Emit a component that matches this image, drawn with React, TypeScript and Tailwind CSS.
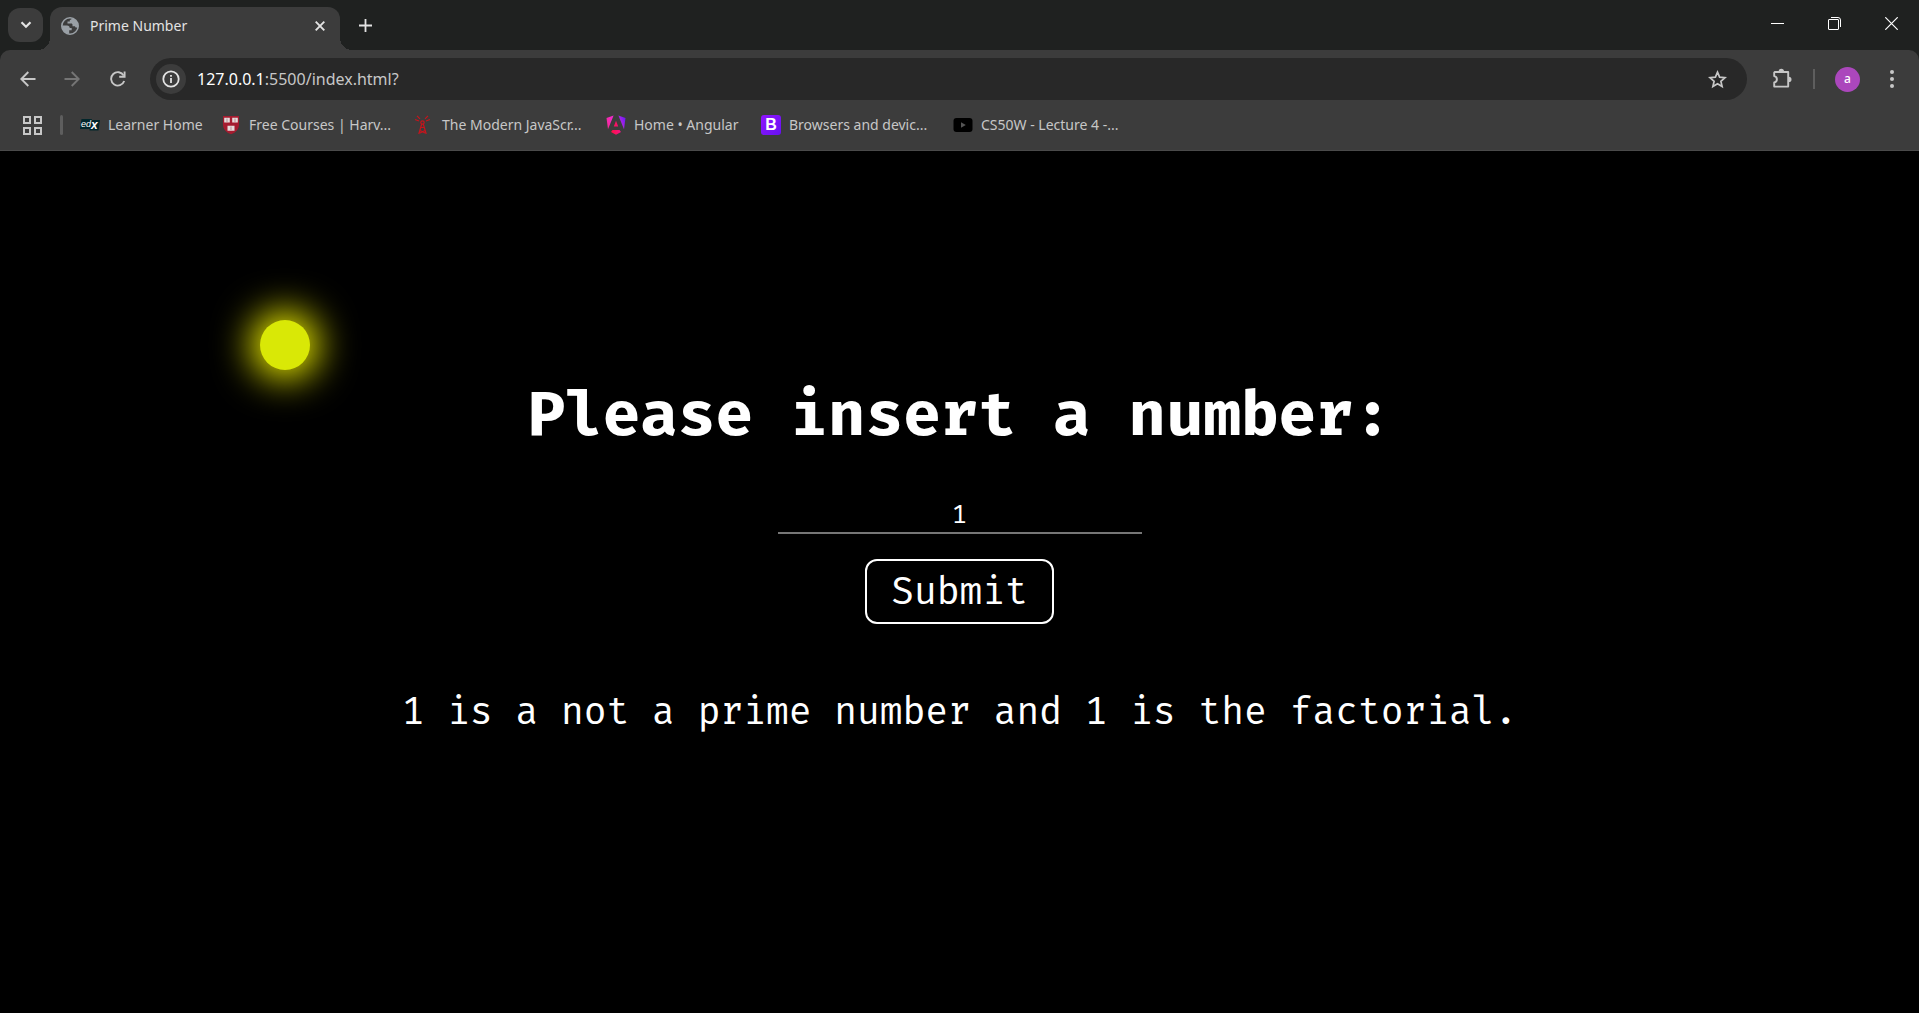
import { useState } from "react";
import type { ReactNode } from "react";

function ChevronIcon() {
  return (
    <svg width="12" height="8" viewBox="0 0 12 8" fill="none" stroke="#e3e3e3" strokeWidth="2.2">
      <path d="M1.5 1.2 6 5.7l4.500-4.500" />
    </svg>
  );
}

function GlobeIcon() {
  return (
    <svg width="18" height="18" viewBox="0 0 18 18">
      <circle cx="9" cy="9" r="8.200" fill="#3c3c3c" stroke="#9aa0a6" strokeWidth="1.600" />
      <path
        d="M1 8.500h5c1.800 0 2.700.9 2.700 2.500h2v2.300H8.200v3.500C4 17 1.200 13.500 1 8.500z"
        fill="#9aa0a6"
      />
      <path
        d="M10.800 1.200c-.2 1-.9 1.600-2 1.700v1.600H6.500v2h3.700c.9 0 1.300.6 1.300 1.300v1.400h1.800c.9 0 1.200.6 1.200 1.300h2.600C17.500 6 15.300 2 10.800 1.200z"
        fill="#9aa0a6"
      />
    </svg>
  );
}

function CrossIcon() {
  return (
    <svg width="10" height="10" viewBox="0 0 10 10" stroke="#e3e3e3" strokeWidth="1.900">
      <path d="M.7.7l8.600 8.600M9.300.7.7 9.300" />
    </svg>
  );
}

function PlusIcon() {
  return (
    <svg width="13" height="13" viewBox="0 0 13 13" stroke="#e3e3e3" strokeWidth="1.800">
      <path d="M6.500 0v13M0 6.500h13" />
    </svg>
  );
}

function ArrowIcon({ color, flip }: { color: string; flip?: boolean }) {
  return (
    <svg
      width="16"
      height="16"
      viewBox="0 0 16 16"
      fill="none"
      stroke={color}
      strokeWidth="1.900"
      className={flip ? "rotate-180" : ""}
    >
      <path d="M15.500 8H1.800M8.300 1 1.300 8l7 7" />
    </svg>
  );
}

function ReloadIcon() {
  return (
    <svg width="16" height="16" viewBox="0 0 16 16" fill="none" stroke="#c7c7c7" strokeWidth="1.900">
      <path d="M13.700 4.600A6.700 6.700 0 1 0 14.200 10" />
      <path d="M14.600.6v5.200H9.200" />
    </svg>
  );
}

function InfoIcon() {
  return (
    <svg width="18" height="18" viewBox="0 0 18 18" fill="none" stroke="#e3e3e3" strokeWidth="1.800">
      <circle cx="9" cy="9" r="7.700" />
      <path d="M9 8v5M9 5v1.800" />
    </svg>
  );
}

function StarIcon() {
  return (
    <svg width="19" height="19" viewBox="0 0 19 19" fill="none" stroke="#c7c7c7" strokeWidth="1.700">
      <path d="M9.500 2.200l2.100 5 5.400.5-4.100 3.600 1.200 5.300-4.600-2.800-4.600 2.800 1.200-5.300L2 7.700l5.400-.5z" />
    </svg>
  );
}

function PuzzleIcon() {
  return (
    <svg width="22" height="22" viewBox="0 0 22 22">
      <path
        d="M3.800 4h13.400v14.600H3.200v-4.100c3.600-.5 3.600-5.900 0-6.400V4.600z"
        fill="none"
        stroke="#c7c7c7"
        strokeWidth="1.900"
        strokeLinejoin="round"
      />
      <path d="M7.600 3.500a2.700 2.700 0 0 1 5.400 0zM17.800 8.700a2.700 2.700 0 0 1 0 5.400z" fill="#c7c7c7" />
    </svg>
  );
}

function DotsIcon() {
  return (
    <svg width="4" height="18" viewBox="0 0 4 18" fill="#c7c7c7">
      <circle cx="2" cy="2" r="2" />
      <circle cx="2" cy="9" r="2" />
      <circle cx="2" cy="16" r="2" />
    </svg>
  );
}

function AppsIcon() {
  return (
    <svg width="19" height="19" viewBox="0 0 19 19" fill="none" stroke="#c7c7c7" strokeWidth="2">
      <path d="M1 1h6v6H1zM12 1h6v6h-6zM1 12h6v6H1zM12 12h6v6h-6z" />
    </svg>
  );
}

function EdxIcon() {
  return (
    <svg width="20" height="20" viewBox="0 0 20 20">
      <path d="M1.500 4H12l-.3 1H20l-1.500 10.500H9.500l.2-1.500H0z" fill="#02262b" />
      <text x="1" y="12" fontSize="9" fontStyle="italic" fontFamily="Liberation Sans, sans-serif" fill="#fff">
        ed
      </text>
      <text x="11" y="14" fontSize="12" fontWeight="700" fontStyle="italic" fontFamily="Liberation Sans, sans-serif" fill="#fff">
        x
      </text>
    </svg>
  );
}

function ShieldIcon() {
  return (
    <svg width="20" height="20" viewBox="0 0 20 20">
      <path d="M2 1h16v8.500c0 4.500-3 8-8 9.800-5-1.800-8-5.300-8-9.800z" fill="#a51c30" />
      <path d="M3.200 2.800h5.600v4.800H3.200zM11.200 2.800h5.600v4.800h-5.600zM6.500 10.800h7v5h-7z" fill="#e6dcdc" />
      <path d="M6 3.500v3.500M14 3.500v3.500M10 11.500v3.500" stroke="#b98d93" />
    </svg>
  );
}

function TowerIcon() {
  return (
    <svg width="20" height="20" viewBox="0 0 20 20" fill="none" stroke="#c8141c" strokeWidth="1.200">
      <circle cx="8.500" cy="7.500" r="1.700" />
      <path d="M7.700 9 4.800 19M9.300 9l2.900 10M6.700 12.500h3.600M6 15.500l5 2.500M11 15.500 6 18" />
      <path d="M1 4.500l4 1.500M3 .8l3 3M16 4.500 12 6M14 .8l-3 3" />
    </svg>
  );
}

function AngularIcon() {
  return (
    <svg width="20" height="20" viewBox="0 0 20 20">
      <defs>
        <linearGradient id="angular" x1="0" y1="0.600" x2="1" y2="0.300">
          <stop offset="0" stopColor="#f52a9a" />
          <stop offset="0.450" stopColor="#f02ad0" />
          <stop offset="1" stopColor="#6c1cf5" />
        </linearGradient>
        <linearGradient id="angularBase" x1="0" y1="0" x2="1" y2="0">
          <stop offset="0" stopColor="#ff1040" />
          <stop offset="1" stopColor="#f3128a" />
        </linearGradient>
      </defs>
      <path d="M7.600.5 2 14.200.5 3zM12.400.5 18 14.200 19.500 3z" fill="url(#angular)" />
      <path d="M10 5.800 7.800 11.500h4.400zM6.500 15h7l1.500 2-5 2.800L5 17z" fill="url(#angularBase)" />
    </svg>
  );
}

function BootstrapIcon() {
  return (
    <span className="flex size-5 items-center justify-center rounded-[3px] bg-linear-to-br from-[#9013fe] to-[#6610f2] font-['Liberation_Sans',sans-serif] text-base leading-5 font-bold text-white">
      B
    </span>
  );
}

function VideoIcon() {
  return (
    <svg width="20" height="20" viewBox="0 0 20 20">
      <rect x="0.500" y="3" width="19" height="14" rx="3" fill="#000" />
      <path d="M8 7.200v5.600l4.800-2.800z" fill="#555" />
    </svg>
  );
}

const bookmarks: { label: string; icon: ReactNode; width: string }[] = [
  { label: "Learner Home", icon: <EdxIcon />, width: "w-[141px]" },
  { label: "Free Courses | Harv...", icon: <ShieldIcon />, width: "w-[193px]" },
  { label: "The Modern JavaScr...", icon: <TowerIcon />, width: "w-[192px]" },
  { label: "Home • Angular", icon: <AngularIcon />, width: "w-[155px]" },
  { label: "Browsers and devic...", icon: <BootstrapIcon />, width: "w-[192px]" },
  { label: "CS50W - Lecture 4 -...", icon: <VideoIcon />, width: "w-[192px]" },
];

function TabStrip() {
  return (
    <header className="flex h-[50px] items-end bg-[#1f2120] pl-2">
      <button aria-label="Search tabs" className="mb-2 flex h-[34px] w-[35px] items-center justify-center rounded-xl bg-[#3c3c3c]">
        <ChevronIcon />
      </button>
      <div className="relative ml-[7px] flex h-[43px] w-[290px] items-center rounded-t-xl bg-[#3c3c3c] pr-[15px] pb-1.5 pl-[11px]">
        <span className="absolute bottom-0 -left-3 size-3 bg-[radial-gradient(circle_at_top_left,transparent_12px,#3c3c3c_12px)]" />
        <span className="absolute -right-3 bottom-0 size-3 bg-[radial-gradient(circle_at_top_right,transparent_12px,#3c3c3c_12px)]" />
        <GlobeIcon />
        <span className="ml-[11px] flex-1 text-sm text-[#e3e3e3]">Prime Number</span>
        <button aria-label="Close tab">
          <CrossIcon />
        </button>
      </div>
      <button aria-label="New tab" className="ml-3 flex h-[50px] w-[26px] items-center justify-center">
        <PlusIcon />
      </button>
      <div className="ml-auto flex h-[50px] items-center pb-1">
        <button aria-label="Minimize" className="flex h-8 w-[57px] items-center justify-center">
          <svg width="13" height="13" viewBox="0 0 13 13" stroke="#fff">
            <path d="M0 6.500h13" />
          </svg>
        </button>
        <button aria-label="Restore" className="flex h-8 w-[57px] items-center justify-center">
          <svg width="13" height="13" viewBox="0 0 13 13" fill="none" stroke="#fff">
            <rect x="0.500" y="2.500" width="10" height="10" rx="0.500" />
            <path d="M3 .5h7a2.500 2.500 0 0 1 2.500 2.500v7" />
          </svg>
        </button>
        <button aria-label="Close window" className="flex h-8 w-14 items-center justify-center">
          <svg width="13" height="13" viewBox="0 0 13 13" stroke="#fff" strokeWidth="1.200">
            <path d="M.3.3l12.400 12.400M12.700.3.300 12.700" />
          </svg>
        </button>
      </div>
    </header>
  );
}

function Toolbar() {
  return (
    <div className="flex h-[58px] items-center pl-5">
      <button aria-label="Back" className="w-11">
        <ArrowIcon color="#c7c7c7" />
      </button>
      <button aria-label="Forward" className="w-[46px]">
        <ArrowIcon color="#757575" flip />
      </button>
      <button aria-label="Reload" className="w-10">
        <ReloadIcon />
      </button>
      <div className="flex h-[42px] flex-1 items-center rounded-full bg-[#282828] pr-5 pl-1.5">
        <button aria-label="Site information" className="flex size-[30px] items-center justify-center rounded-full bg-[#3c3c3c]">
          <InfoIcon />
        </button>
        <a href="#address" className="ml-[11px] flex-1 text-base text-[#c7c7c7]">
          <span className="text-white">127.0.0.1</span>:5500/index.html?
        </a>
        <button aria-label="Bookmark this page">
          <StarIcon />
        </button>
      </div>
      <button aria-label="Extensions" className="ml-6">
        <PuzzleIcon />
      </button>
      <span className="ml-5 h-5 w-0.5 bg-[#5e5e5e]" />
      <button aria-label="Profile" className="ml-5 flex size-[25px] items-center justify-center rounded-full bg-[#ab47bc] text-xs leading-3 font-medium text-white">
        a
      </button>
      <button aria-label="Menu" className="ml-[30px] mr-[25px]">
        <DotsIcon />
      </button>
    </div>
  );
}

function BookmarksBar() {
  return (
    <nav aria-label="Bookmarks" className="flex h-[42px] items-center overflow-hidden pb-2 pl-[23px]">
      <button aria-label="Apps" className="shrink-0">
        <AppsIcon />
      </button>
      <span className="ml-[18px] h-5 w-[3px] shrink-0 rounded-full bg-[#5e5e5e]" />
      <ul className="ml-[17px] flex">
        {bookmarks.map((b) => (
          <li key={b.label} className={`shrink-0 ${b.width}`}>
            <a href="#bookmark" className="flex items-center gap-2 text-sm whitespace-nowrap text-[#c7c7c7]">
              {b.icon}
              {b.label}
            </a>
          </li>
        ))}
      </ul>
    </nav>
  );
}

export default function App() {
  const [value, setValue] = useState("1");
  return (
    <div className="flex min-h-screen flex-col bg-black font-['Noto_Sans',sans-serif]">
      <TabStrip />
      <div className="bg-[#1f2120]">
        <div className="rounded-t-[10px] border-b border-[#4a4a4a] bg-[#3c3c3c]">
          <Toolbar />
          <BookmarksBar />
        </div>
      </div>
      <main className="relative flex flex-1 flex-col items-center bg-black pt-[226px] font-['Fira_Code','DejaVu_Sans_Mono',monospace] text-white">
        <div className="absolute top-[169px] left-[260px] size-[50px] rounded-full bg-[#d9e806] shadow-[0_0_38px_8px_#ffff00]" />
        <h1 className="text-[61px] leading-[80px] font-bold">
          <label htmlFor="number">Please insert a number:</label>
        </h1>
        <form className="mt-[41px] flex flex-col items-center" onSubmit={(e) => e.preventDefault()}>
          <input
            id="number"
            type="text"
            value={value}
            onChange={(e) => setValue(e.target.value)}
            className="h-9 w-[364px] border-b-2 border-[#767676] bg-transparent pt-0.5 text-center text-[25px] outline-none"
          />
          <button type="submit" className="mt-[25px] h-[65px] rounded-xl border-2 border-white px-6 pt-0.5 text-[37px] leading-[56px]">
            Submit
          </button>
        </form>
        <p className="mt-[61px] text-[37px] leading-[56px]">1 is a not a prime number and 1 is the factorial.</p>
      </main>
    </div>
  );
}
